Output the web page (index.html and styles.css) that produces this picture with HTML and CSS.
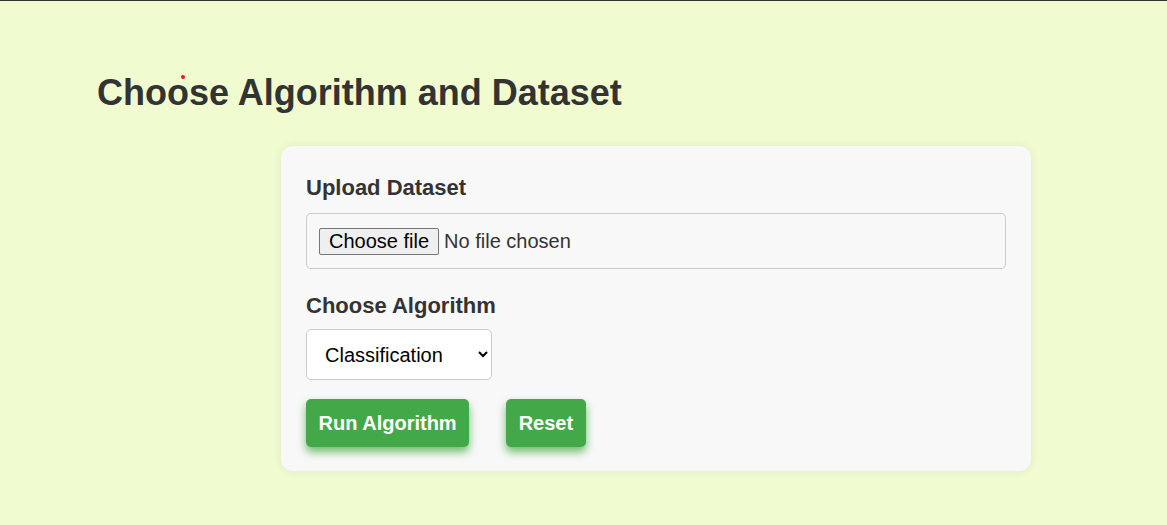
FILE: index.html
```html
<!DOCTYPE html>
<html>
<head>
<meta charset="utf-8">
<link rel="stylesheet" href="styles.css">
</head>
<body>
<main class="page">
  <h1 class="title">Choose Algorithm and Dataset</h1>
  <span class="dot"></span>
  <form class="card">
    <label class="label" for="file">Upload Dataset</label>
    <div class="file-box">
      <label class="file-btn" for="file">Choose file</label>
      <span class="file-name">No file chosen</span>
      <input type="file" id="file" class="file-input">
    </div>
    <label class="label label-second" for="algo">Choose Algorithm</label>
    <select id="algo" class="select">
      <option>Classification</option>
      <option>Regression</option>
      <option>Clustering</option>
    </select>
    <div class="actions">
      <button type="button" class="btn">Run Algorithm</button>
      <button type="reset" class="btn">Reset</button>
    </div>
  </form>
</main>
</body>
</html>
```
FILE: styles.css
```css
html, body {
  margin: 0;
  padding: 0;
}
body {
  background: #f0fcd0;
  border-top: 1px solid #333;
  font-family: "Liberation Sans", Arial, sans-serif;
  color: #333;
  min-height: 524px;
}
.page {
  position: relative;
  padding: 70px 0 0 97px;
}
.title {
  margin: 0;
  font-size: 36px;
  font-weight: bold;
  line-height: 44px;
  color: #333;
}
.dot {
  position: absolute;
  left: 181px;
  top: 74px;
  width: 4px;
  height: 4px;
  border-radius: 50%;
  background: #e81c1c;
}
.card {
  margin: 31px 0 0 184px;
  width: 700px;
  padding: 25px 25px 24px;
  background: #f8f8f8;
  border-radius: 12px;
  box-shadow: 0 0 10px rgba(0,0,0,0.08);
  display: flex;
  flex-direction: column;
  align-items: flex-start;
}
.label {
  font-size: 22px;
  font-weight: bold;
  line-height: 25px;
  margin: 4px 0 13px;
}
.label-second {
  margin-top: 24px;
  margin-bottom: 11px;
}
.file-box {
  box-sizing: border-box;
  width: 700px;
  height: 56px;
  border: 1px solid #ccc;
  border-radius: 5px;
  padding: 0 12px;
  display: flex;
  align-items: center;
  gap: 5px;
}
.file-btn {
  box-sizing: border-box;
  height: 27px;
  padding: 0 9px;
  display: flex;
  align-items: center;
  background: #efefef;
  border: 1px solid #767676;
  border-radius: 2px;
  font-size: 20px;
  color: #000;
}
.file-name {
  font-size: 20px;
  color: #333;
}
.file-input {
  display: none;
}
.select {
  box-sizing: border-box;
  width: 186px;
  height: 51px;
  padding: 0 14px;
  border: 1px solid #ccc;
  border-radius: 5px;
  background: #fff;
  font-family: "Liberation Sans", Arial, sans-serif;
  font-size: 20px;
  color: #000;
}
.actions {
  display: flex;
  gap: 37px;
  margin-top: 19px;
}
.btn {
  height: 48px;
  padding: 0 12.5px;
  border: none;
  border-radius: 5px;
  background: #43a847;
  color: #fff;
  font-family: "Liberation Sans", Arial, sans-serif;
  font-size: 20px;
  font-weight: bold;
  box-shadow: 0 5px 8px rgba(20, 150, 20, 0.6);
}
```
